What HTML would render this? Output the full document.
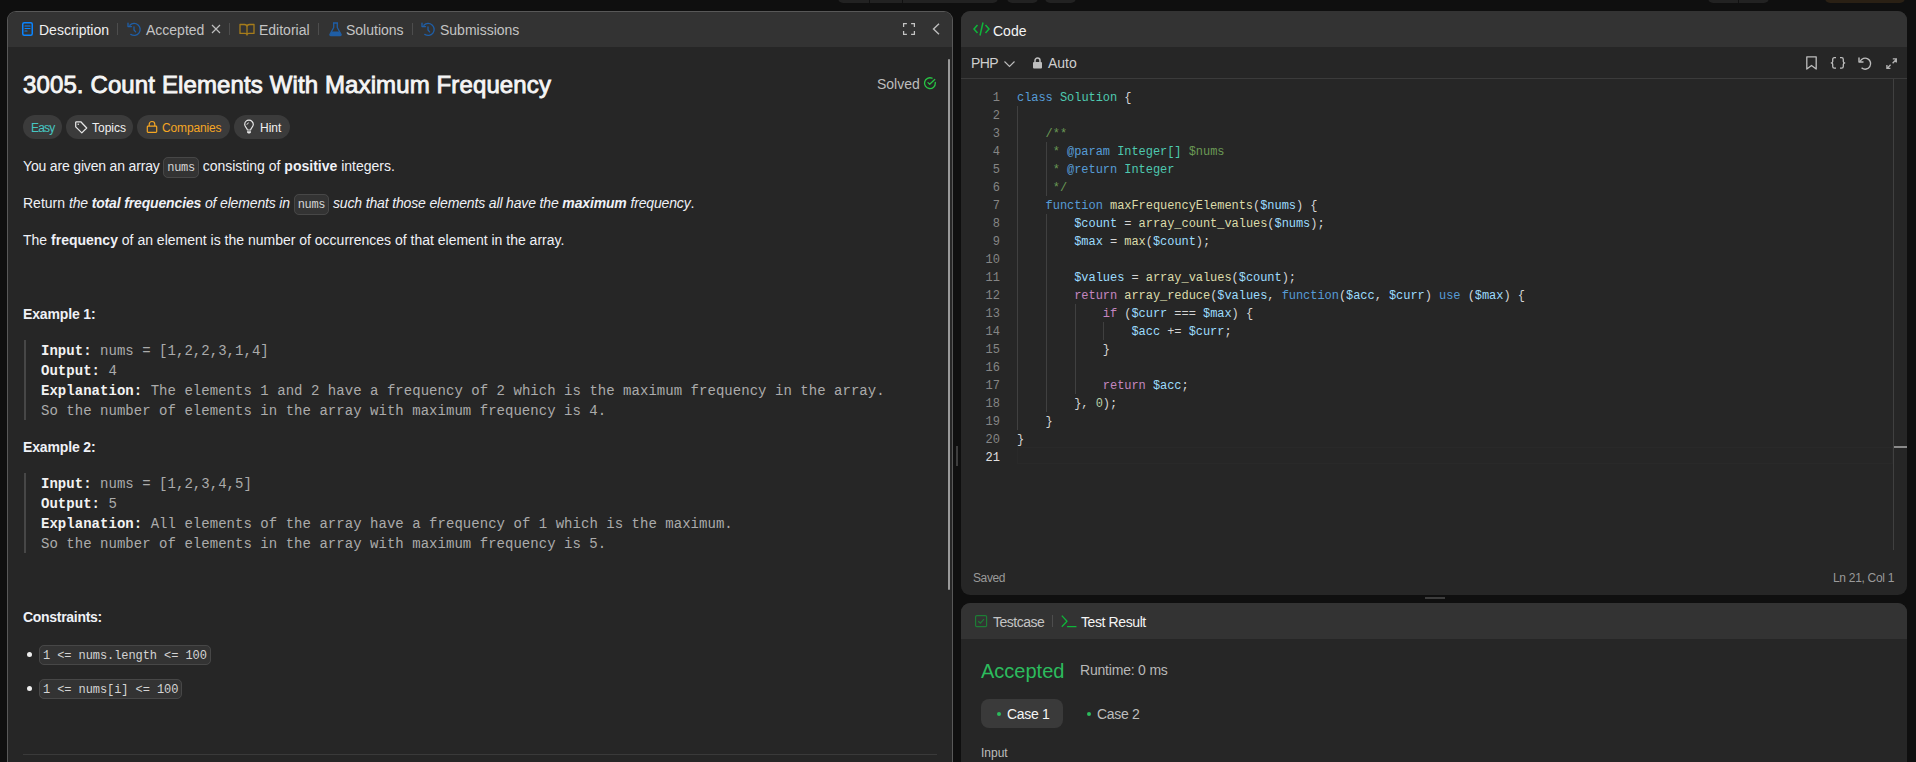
<!DOCTYPE html>
<html><head><meta charset="utf-8">
<style>
*{box-sizing:border-box;margin:0;padding:0}
html,body{width:1916px;height:762px;overflow:hidden;background:#0f0f0f;font-family:"Liberation Sans",sans-serif;color:#eff1f6}
.a{position:absolute;white-space:nowrap}
.panel{position:absolute;background:#262626;border-radius:9px;overflow:hidden}
.hdr{position:absolute;left:0;right:0;top:0;height:36px;background:#333333}
.t14{font-size:14px;line-height:20px}
.gray{color:#c4c4c4}
.div{position:absolute;width:1px;height:12px;background:#4d4d4d}
.pill{position:absolute;top:115px;height:24px;border-radius:12px;background:#3b3b3b}
.chip{font-family:"Liberation Mono",monospace;font-size:12px;background:#333;border:1px solid #474747;border-radius:5px;padding:3px 3px 2px;color:#d4d4d4;letter-spacing:-0.35px}
.chip2{padding:3px 3px 1px;letter-spacing:-0.08px}
.ex{position:absolute;font-family:"Liberation Mono",monospace;font-size:14px;line-height:20px;white-space:pre;color:#ababab;letter-spacing:0.035px}
.ex b{color:#f2f2f2}
.code{position:absolute;left:1017px;letter-spacing:-0.05px;font-family:"Liberation Mono",monospace;font-size:12px;line-height:18px;white-space:pre;color:#d4d4d4}
.ln{position:absolute;left:970px;width:30px;text-align:right;font-family:"Liberation Mono",monospace;font-size:12px;line-height:18px;color:#858585}
.k{color:#569cd6}.c{color:#4ec9b0}.cm{color:#6a9955}.f{color:#dcdcaa}.v{color:#9cdcfe}.p{color:#c586c0}.n{color:#b5cea8}
.g{position:absolute;width:1px;background:#404040}
svg{position:absolute;overflow:visible}
</style></head><body>
<!-- top toolbar remnants -->
<div class="a" style="left:838px;top:-10px;width:160px;height:13px;background:#222;border-radius:5px"></div>
<div class="a" style="left:869px;top:0px;width:1px;height:3px;background:#111"></div>
<div class="a" style="left:902px;top:0px;width:1px;height:3px;background:#111"></div>
<div class="a" style="left:1007px;top:-10px;width:31px;height:13px;background:#222;border-radius:5px"></div>
<div class="a" style="left:1045px;top:-10px;width:31px;height:13px;background:#222;border-radius:5px"></div>
<div class="a" style="left:1708px;top:-10px;width:61px;height:13px;background:#222;border-radius:5px"></div>
<div class="a" style="left:1738px;top:0px;width:1px;height:3px;background:#111"></div>
<div class="a" style="left:1825px;top:-10px;width:80px;height:13px;background:#2a2014;border-radius:5px"></div>

<!-- LEFT PANEL -->
<div class="a" style="left:7px;top:11px;width:946px;height:770px;border-radius:9px;background:#585858"></div>
<div class="panel" style="left:8px;top:12px;width:944px;height:768px;border-radius:8px">
  <div class="hdr" style="height:35px"></div>
</div>

<!-- tabs -->
<svg style="left:22px;top:22px" width="11" height="14" viewBox="0 0 11 14"><rect x="0.75" y="0.75" width="9.5" height="12.5" rx="1.5" fill="none" stroke="#0a84ff" stroke-width="1.5"/><path d="M3 4h5M3 6.5h5M3 9h2" stroke="#0a84ff" stroke-width="1.2" stroke-linecap="round"/></svg>
<div class="a t14" style="left:39px;top:20px;color:#f0f0f0">Description</div>
<div class="div" style="left:117px;top:23px"></div>
<svg style="left:122px;top:18px" width="24" height="22" viewBox="0 0 24 22"><path d="M7.9 7.2A6 6 0 1 1 8.8 16.4" fill="none" stroke="#1f5ea6" stroke-width="1.35" stroke-linecap="round"/><path d="M6 5.2V8.6H9.5" fill="none" stroke="#1f5ea6" stroke-width="1.35" stroke-linecap="round" stroke-linejoin="round"/><path d="M12 9V12L13.6 13.9" fill="none" stroke="#1f5ea6" stroke-width="1.3" stroke-linecap="round"/></svg>
<div class="a t14 gray" style="left:146px;top:20px">Accepted</div>
<svg style="left:211px;top:24px" width="10" height="10" viewBox="0 0 10 10"><path d="M1 1L9 9M9 1L1 9" stroke="#bdbdbd" stroke-width="1.2"/></svg>
<div class="div" style="left:229px;top:23px"></div>
<svg style="left:239px;top:23px" width="16" height="13" viewBox="0 0 16 13"><path d="M1 1.5h4.5c1.3 0 2.5 1 2.5 2.3v8.2c0-1-1-1.6-2-1.6H1zM15 1.5h-4.5C9.2 1.5 8 2.5 8 3.8v8.2c0-1 1-1.6 2-1.6H15z" fill="none" stroke="#a67c1b" stroke-width="1.3" stroke-linejoin="round"/></svg>
<div class="a t14 gray" style="left:259px;top:20px">Editorial</div>
<div class="div" style="left:318px;top:23px"></div>
<svg style="left:329px;top:22px" width="13" height="14" viewBox="0 0 13 14"><path d="M4 1h5M4.7 1v4.5L1 12.2c-.3.6.1 1.3.8 1.3h9.4c.7 0 1.1-.7.8-1.3L8.3 5.5V1" fill="none" stroke="#1f5ea6" stroke-width="1.3" stroke-linejoin="round"/><path d="M2.5 9.5h8l1.3 2.8c.2.5-.1 1-.7 1H1.9c-.6 0-.9-.5-.7-1z" fill="#1f5ea6"/></svg>
<div class="a t14 gray" style="left:346px;top:20px">Solutions</div>
<div class="div" style="left:412px;top:23px"></div>
<svg style="left:416px;top:18px" width="24" height="22" viewBox="0 0 24 22"><path d="M7.9 7.2A6 6 0 1 1 8.8 16.4" fill="none" stroke="#1f5ea6" stroke-width="1.35" stroke-linecap="round"/><path d="M6 5.2V8.6H9.5" fill="none" stroke="#1f5ea6" stroke-width="1.35" stroke-linecap="round" stroke-linejoin="round"/><path d="M12 9V12L13.6 13.9" fill="none" stroke="#1f5ea6" stroke-width="1.3" stroke-linecap="round"/></svg>
<div class="a t14 gray" style="left:440px;top:20px">Submissions</div>
<svg style="left:903px;top:23px" width="12" height="12" viewBox="0 0 12 12"><path d="M0.6 3.9V0.6H3.9M8.1 0.6h3.3v3.3M11.4 8.1v3.3H8.1M3.9 11.4H0.6V8.1" fill="none" stroke="#c4c4c4" stroke-width="1.25"/></svg>
<svg style="left:932px;top:23px" width="8" height="12" viewBox="0 0 8 12"><path d="M7 0.7L1.5 6L7 11.3" fill="none" stroke="#bdbdbd" stroke-width="1.4"/></svg>

<!-- title -->
<div class="a" style="left:23px;top:70px;font-size:24px;line-height:30px;color:#f5f5f5;letter-spacing:0.12px;-webkit-text-stroke:0.85px #f5f5f5">3005. Count Elements With Maximum Frequency</div>
<div class="a t14" style="left:877px;top:74px;color:#bdbdbd">Solved</div>
<svg style="left:923px;top:76px" width="14" height="14" viewBox="0 0 14 14"><path d="M12.3 6.4V7A5.4 5.4 0 1 1 9 2.2" fill="none" stroke="#28c244" stroke-width="1.35" stroke-linecap="round"/><path d="M5 6.6l1.7 1.6L11.7 3.5" fill="none" stroke="#28c244" stroke-width="1.3" stroke-linecap="round" stroke-linejoin="round"/></svg>

<!-- pills -->
<div class="pill" style="left:23px;width:39px"></div>
<div class="a" style="left:31px;top:120px;font-size:12px;line-height:16px;color:#46c6c2;letter-spacing:-0.8px">Easy</div>
<div class="pill" style="left:66px;width:67px"></div>
<svg style="left:75px;top:121px" width="13" height="13" viewBox="0 0 13 13"><path d="M0.7 1.6v4.3l6.1 6 4.9-4.9L5.8 0.8H1.5a.8.8 0 0 0-.8.8z" fill="none" stroke="#e6e6e6" stroke-width="1.25" stroke-linejoin="round"/><rect x="2.6" y="2.6" width="1.4" height="1.4" fill="#cfcfcf"/></svg>
<div class="a" style="left:92px;top:120px;font-size:12px;line-height:16px;color:#f0f0f0">Topics</div>
<div class="pill" style="left:137px;width:93px"></div>
<svg style="left:146px;top:121px" width="12" height="12" viewBox="0 0 12 12"><path d="M3.2 5V3.3a2.8 2.8 0 0 1 5.6 0V5" fill="none" stroke="#f5a623" stroke-width="1.2"/><rect x="1.3" y="5.2" width="9.4" height="6.2" rx="0.8" fill="none" stroke="#f5a623" stroke-width="1.2"/></svg>
<div class="a" style="left:162px;top:120px;font-size:12px;line-height:16px;color:#f5a623;letter-spacing:-0.15px">Companies</div>
<div class="pill" style="left:234px;width:56px"></div>
<svg style="left:244px;top:120px" width="10" height="14" viewBox="0 0 10 14"><path d="M3.4 10C3.2 8 0.7 6.9 0.7 4.5A4.3 4.3 0 0 1 9.3 4.5C9.3 6.9 6.8 8 6.6 10Z" fill="none" stroke="#e6e6e6" stroke-width="1.2" stroke-linejoin="round"/><path d="M3 11.2h4v0.9a1.4 1.4 0 0 1-1.4 1.4h-1.2a1.4 1.4 0 0 1-1.4-1.4z" fill="#e6e6e6"/><path d="M2.9 4.4A1.8 1.8 0 0 1 4.4 2.9" fill="none" stroke="#e6e6e6" stroke-width="0.9" stroke-linecap="round"/></svg>
<div class="a" style="left:260px;top:120px;font-size:12px;line-height:16px;color:#f0f0f0">Hint</div>

<!-- description -->
<div class="a t14" style="left:23px;top:156px"><span style="letter-spacing:-0.17px">You are given an array </span><span class="chip">nums</span> consisting of <b>positive</b> integers.</div>
<div class="a t14" style="left:23px;top:193px">Return <i style="letter-spacing:-0.15px">the <b>total frequencies</b> of elements in </i><span class="chip">nums</span> <i style="letter-spacing:-0.15px">such that those elements all have the <b>maximum</b> frequency</i>.</div>
<div class="a t14" style="left:23px;top:230px">The <b>frequency</b> of an element is the number of occurrences of that element in the array.</div>

<div class="a t14" style="left:23px;top:304px"><b style="letter-spacing:-0.15px">Example 1:</b></div>
<div class="a" style="left:24px;top:340px;width:2px;height:80px;background:#474747"></div>
<div class="ex" style="left:41px;top:341px"><b>Input:</b> nums = [1,2,2,3,1,4]
<b>Output:</b> 4
<b>Explanation:</b> The elements 1 and 2 have a frequency of 2 which is the maximum frequency in the array.
So the number of elements in the array with maximum frequency is 4.</div>

<div class="a t14" style="left:23px;top:437px"><b style="letter-spacing:-0.15px">Example 2:</b></div>
<div class="a" style="left:24px;top:473px;width:2px;height:80px;background:#474747"></div>
<div class="ex" style="left:41px;top:474px"><b>Input:</b> nums = [1,2,3,4,5]
<b>Output:</b> 5
<b>Explanation:</b> All elements of the array have a frequency of 1 which is the maximum.
So the number of elements in the array with maximum frequency is 5.</div>

<div class="a t14" style="left:23px;top:607px"><b style="letter-spacing:-0.3px">Constraints:</b></div>
<div class="a" style="left:27px;top:652px;width:5px;height:5px;border-radius:50%;background:#eee"></div>
<div class="a t14" style="left:39px;top:644px"><span class="chip chip2">1 &lt;= nums.length &lt;= 100</span></div>
<div class="a" style="left:27px;top:686px;width:5px;height:5px;border-radius:50%;background:#eee"></div>
<div class="a t14" style="left:39px;top:678px"><span class="chip chip2">1 &lt;= nums[i] &lt;= 100</span></div>
<div class="a" style="left:23px;top:754px;width:914px;height:1px;background:#3a3a3a"></div>

<!-- scrollbar & divider -->
<div class="a" style="left:948px;top:59px;width:2px;height:531px;background:#9a9a9a;border-radius:1px"></div>
<div class="a" style="left:956px;top:446px;width:2px;height:20px;background:#3d3d3d"></div>

<!-- CODE PANEL -->
<div class="panel" style="left:961px;top:11px;width:946px;height:584px">
  <div class="hdr"></div>
  <div class="a" style="left:0;right:0;top:67px;height:1px;background:#3b3b3b"></div>
</div>
<svg style="left:973px;top:22px" width="17" height="14" viewBox="0 0 17 14"><path d="M4.5 3L1 7l3.5 4M12.5 3L16 7l-3.5 4M10 0.5L7 13.5" fill="none" stroke="#0fb53a" stroke-width="1.5"/></svg>
<div class="a t14" style="left:993px;top:21px;color:#f5f5f5">Code</div>
<div class="a t14" style="left:971px;top:53px;color:#cfcfcf;letter-spacing:-0.6px">PHP</div>
<svg style="left:1004px;top:61px" width="11" height="6" viewBox="0 0 11 6"><path d="M0.5 0.5L5.5 5.5L10.5 0.5" fill="none" stroke="#bdbdbd" stroke-width="1.1"/></svg>
<svg style="left:1033px;top:57px" width="9" height="12" viewBox="0 0 9 12"><path d="M2 5V3.5a2.5 2.5 0 0 1 5 0V5" fill="none" stroke="#bdbdbd" stroke-width="1.5"/><rect x="0" y="5" width="9" height="6.5" rx="1" fill="#bdbdbd"/></svg>
<div class="a t14" style="left:1048px;top:53px;color:#cfcfcf">Auto</div>
<svg style="left:1806px;top:56px" width="11" height="14" viewBox="0 0 11 14"><path d="M0.8 0.8h9.4v12.2L5.5 9.5 0.8 13z" fill="none" stroke="#bdbdbd" stroke-width="1.3" stroke-linejoin="round"/></svg>
<svg style="left:1830px;top:57px" width="16" height="12" viewBox="0 0 16 12"><path d="M6 0.7H4.4C3.3 0.7 2.7 1.3 2.7 2.4V4.4C2.7 5.3 2 5.9 0.8 5.9 2 5.9 2.7 6.5 2.7 7.4V9.4C2.7 10.5 3.3 11.1 4.4 11.1H6M10 0.7h1.6c1.1 0 1.7.6 1.7 1.7v2c0 .9.7 1.5 1.9 1.5-1.2 0-1.9.6-1.9 1.5v2c0 1.1-.6 1.7-1.7 1.7H10" fill="none" stroke="#bdbdbd" stroke-width="1.3"/></svg>
<svg style="left:1858px;top:56.5px" width="14" height="13" viewBox="0 0 14 13"><path d="M2.2 4.2A5.5 5.5 0 1 1 4 11.2" fill="none" stroke="#bdbdbd" stroke-width="1.4" stroke-linecap="round"/><path d="M1 1v4h4" fill="none" stroke="#bdbdbd" stroke-width="1.4" stroke-linecap="round" stroke-linejoin="round"/></svg>
<svg style="left:1886px;top:57.6px" width="12" height="12" viewBox="0 0 12 12"><path d="M6.6 5.2L10.2 1.6M6.8 0.9h3.5v3.5M4.6 6.8L1 10.4M0.9 7v3.4h3.5" fill="none" stroke="#b3b3b3" stroke-width="1.35"/></svg>

<!-- line numbers -->
<div class="ln" style="top:89px">1<br>2<br>3<br>4<br>5<br>6<br>7<br>8<br>9<br>10<br>11<br>12<br>13<br>14<br>15<br>16<br>17<br>18<br>19<br>20<br><span style="color:#e0e0e0">21</span></div>
<!-- guides -->
<div class="g" style="left:1017px;top:106px;height:324px"></div>
<div class="g" style="left:1046px;top:142px;height:54px"></div>
<div class="g" style="left:1046px;top:214px;height:198px"></div>
<div class="g" style="left:1075px;top:304px;height:90px"></div>
<div class="g" style="left:1103px;top:322px;height:18px"></div>
<div class="a" style="left:1017px;top:447px;width:876px;height:17px;border:1px solid #292929"></div>
<div class="code" style="top:89px"><span class="k">class</span> <span class="c">Solution</span> {

    <span class="cm">/**</span>
<span class="cm">     * </span><span class="k">@param</span> <span class="c">Integer[]</span> <span class="cm">$nums</span>
<span class="cm">     * </span><span class="k">@return</span> <span class="c">Integer</span>
<span class="cm">     */</span>
    <span class="k">function</span> <span class="f">maxFrequencyElements</span>(<span class="v">$nums</span>) {
        <span class="v">$count</span> = <span class="f">array_count_values</span>(<span class="v">$nums</span>);
        <span class="v">$max</span> = <span class="f">max</span>(<span class="v">$count</span>);

        <span class="v">$values</span> = <span class="f">array_values</span>(<span class="v">$count</span>);
        <span class="p">return</span> <span class="f">array_reduce</span>(<span class="v">$values</span>, <span class="k">function</span>(<span class="v">$acc</span>, <span class="v">$curr</span>) <span class="k">use</span> (<span class="v">$max</span>) {
            <span class="p">if</span> (<span class="v">$curr</span> === <span class="v">$max</span>) {
                <span class="v">$acc</span> += <span class="v">$curr</span>;
            }

            <span class="p">return</span> <span class="v">$acc</span>;
        }, <span class="n">0</span>);
    }
}
</div>
<div class="a" style="left:1893px;top:79px;width:1px;height:471px;background:#404040"></div>
<div class="a" style="left:1894px;top:446px;width:13px;height:2px;background:#8a8a8a"></div>
<div class="a" style="left:973px;top:570px;font-size:12px;line-height:16px;color:#9a9a9a;letter-spacing:-0.4px">Saved</div>
<div class="a" style="left:1833px;top:570px;font-size:12px;line-height:16px;color:#9a9a9a;letter-spacing:-0.3px">Ln 21, Col 1</div>
<div class="a" style="left:1425px;top:597px;width:20px;height:2px;background:#3d3d3d"></div>

<!-- RESULT PANEL -->
<div class="panel" style="left:961px;top:603px;width:946px;height:170px">
  <div class="hdr"></div>
</div>
<svg style="left:975px;top:615px" width="13" height="13" viewBox="0 0 13 13"><rect x="0.6" y="0.6" width="11" height="11" rx="1.2" fill="none" stroke="#1d7d35" stroke-width="1.2"/><path d="M3.2 6.2l2.2 2L9 4.2" fill="none" stroke="#1d7d35" stroke-width="1.2"/></svg>
<div class="a t14 gray" style="left:993px;top:612px;letter-spacing:-0.5px">Testcase</div>
<div class="div" style="left:1052px;top:615px"></div>
<svg style="left:1061px;top:615px" width="16" height="13" viewBox="0 0 16 13"><path d="M0.8 0.6l5.2 5.6-5.2 5.6" fill="none" stroke="#0fb53a" stroke-width="1.3" stroke-linejoin="round"/><path d="M6.5 11.7h8.5" stroke="#0fb53a" stroke-width="1.2" stroke-linecap="round"/></svg>
<div class="a t14" style="left:1081px;top:612px;color:#f5f5f5;letter-spacing:-0.4px">Test Result</div>

<div class="a" style="left:981px;top:657px;font-size:20px;line-height:28px;color:#2cbb5d">Accepted</div>
<div class="a t14" style="left:1080px;top:660px;color:#b8b8b8;letter-spacing:-0.2px">Runtime: 0 ms</div>
<div class="a" style="left:981px;top:699px;width:82px;height:29px;border-radius:8px;background:#3a3a3a"></div>
<div class="a" style="left:997px;top:712px;width:4px;height:4px;border-radius:50%;background:#2cbb5d"></div>
<div class="a t14" style="left:1007px;top:704px;color:#f5f5f5;letter-spacing:-0.3px">Case 1</div>
<div class="a" style="left:1087px;top:712px;width:4px;height:4px;border-radius:50%;background:#2cbb5d"></div>
<div class="a t14" style="left:1097px;top:704px;color:#bdbdbd;letter-spacing:-0.3px">Case 2</div>
<div class="a" style="left:981px;top:745px;font-size:12px;line-height:16px;color:#bdbdbd">Input</div>
</body></html>
